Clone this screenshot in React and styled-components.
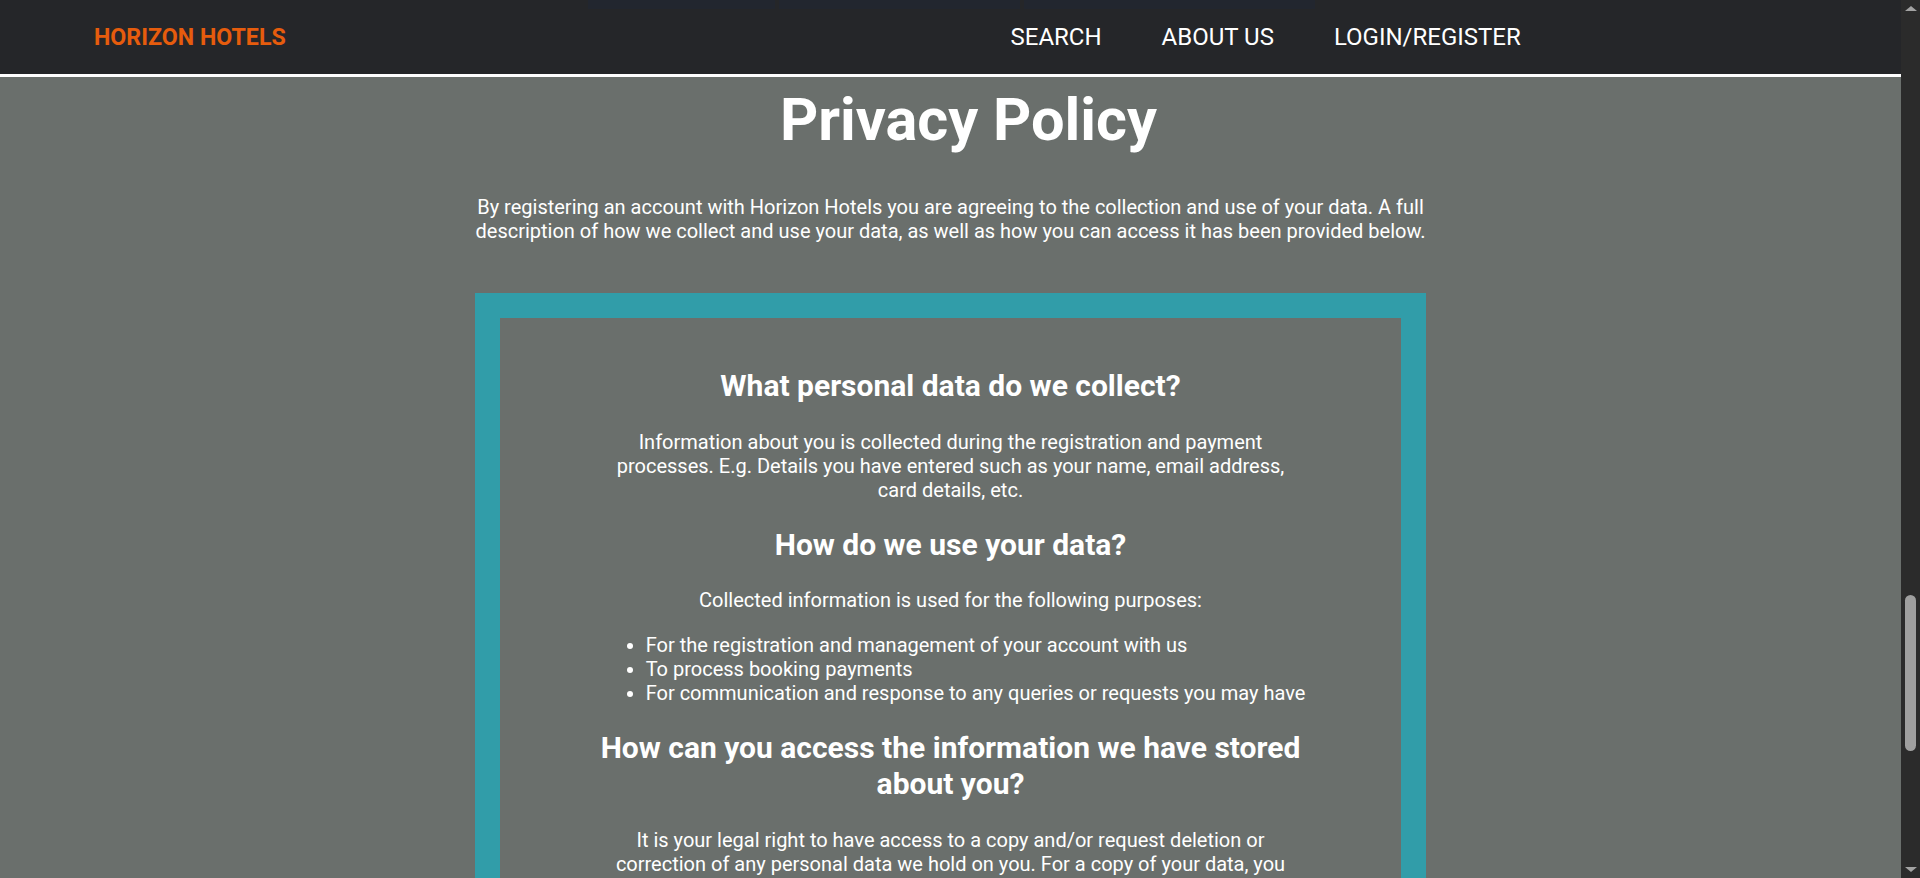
import React from "react";
import styled, { createGlobalStyle } from "styled-components";

const GlobalStyle = createGlobalStyle`
  body {
    margin: 0;
    background: #6a6f6c;
    color: #ffffff;
    font-family: Roboto, "Liberation Sans", Arial, sans-serif;
  }
  * {
    box-sizing: border-box;
  }
`;

const Page = styled.div`
  margin-right: 19px;
`;

const NavBar = styled.header`
  position: fixed;
  top: 0;
  left: 0;
  right: 19px;
  z-index: 10;
  height: 77px;
  background: #252629;
  border-bottom: 3px solid #ffffff;
`;

const BehindStrip = styled.div`
  position: absolute;
  top: 0;
  left: 588px;
  display: flex;
  gap: 4px;
  height: 9px;
`;

const StripPiece = styled.div`
  width: ${(p) => p.$w}px;
  height: 100%;
  background: #22262f;
`;

const NavInner = styled.nav`
  position: relative;
  width: 80%;
  height: 100%;
  padding-left: 94px;
  display: flex;
  align-items: center;
  justify-content: space-between;
`;

const Logo = styled.a`
  font-size: 23.2px;
  font-weight: 700;
  color: #e65c0d;
  text-decoration: none;
`;

const NavLinks = styled.ul`
  list-style: none;
  margin: 0;
  padding: 0;
  display: flex;
  gap: 60px;
`;

const NavLink = styled.a`
  font-size: 24px;
  font-weight: 400;
  color: #ffffff;
  text-decoration: none;
`;

const ScrollRail = styled.div`
  position: fixed;
  top: 0;
  right: 0;
  bottom: 0;
  width: 19px;
  z-index: 20;
  background: #2b2b2b;
  display: flex;
  flex-direction: column;
  align-items: center;
  justify-content: space-between;
  padding: 6px 0;
`;

const Arrow = styled.div`
  width: 0;
  height: 0;
  border-left: 6px solid transparent;
  border-right: 6px solid transparent;
  ${(p) =>
    p.$down
      ? "border-top: 5px solid #a3a3a3;"
      : "border-bottom: 5px solid #a3a3a3;"}
`;

const Thumb = styled.div`
  position: absolute;
  top: 595px;
  left: 4px;
  width: 11px;
  height: 156px;
  border-radius: 6px;
  background: #9f9f9f;
`;

const Main = styled.main`
  padding-top: 77px;
  padding-bottom: 120px;
`;

const Title = styled.h1`
  margin: 7px 0 0;
  padding-left: 36px;
  font-size: 59.5px;
  line-height: 72px;
  font-weight: 700;
  text-align: center;
`;

const Intro = styled.p`
  width: 50%;
  margin: 39px auto 0;
  font-size: 20px;
  line-height: 24px;
  text-align: center;
`;

const Frame = styled.section`
  width: 50%;
  margin: 50px auto 0;
  padding: 25px;
  background: #319da9;
`;

const Panel = styled.div`
  background: #6a6f6c;
  padding: 25px 100px;
  text-align: center;
`;

const Heading = styled.h2`
  margin: 25px 0;
  font-size: 30px;
  line-height: 36.5px;
  font-weight: 700;
`;

const Text = styled.p`
  margin: 20px 0;
  font-size: 20px;
  line-height: 24px;
`;

const ListRow = styled.div`
  display: flex;
  justify-content: center;
  margin: 20.5px 0;
`;

const List = styled.ul`
  flex: none;
  width: max-content;
  margin: 0;
  padding-left: 50px;
  text-align: left;
  font-size: 20px;
  line-height: 24px;
`;

const Item = styled.li``;

export default function App() {
  return (
    <>
      <GlobalStyle />
      <ScrollRail aria-hidden="true">
        <Arrow />
        <Thumb />
        <Arrow $down />
      </ScrollRail>
      <Page>
        <NavBar>
          <BehindStrip aria-hidden="true">
            <StripPiece $w={187} />
            <StripPiece $w={241} />
            <StripPiece $w={291} />
          </BehindStrip>
          <NavInner>
            <Logo href="#">HORIZON HOTELS</Logo>
            <NavLinks>
              <li>
                <NavLink href="#">SEARCH</NavLink>
              </li>
              <li>
                <NavLink href="#">ABOUT US</NavLink>
              </li>
              <li>
                <NavLink href="#">LOGIN/REGISTER</NavLink>
              </li>
            </NavLinks>
          </NavInner>
        </NavBar>
        <Main>
          <Title>Privacy Policy</Title>
          <Intro>
            By registering an account with Horizon Hotels you are agreeing to
            the collection and use of your data. A full description of how we
            collect and use your data, as well as how you can access it has
            been provided below.
          </Intro>
          <Frame>
            <Panel>
              <Heading>What personal data do we collect?</Heading>
              <Text>
                Information about you is collected during the registration and
                payment processes. E.g. Details you have entered such as your
                name, email address, card details, etc.
              </Text>
              <Heading>How do we use your data?</Heading>
              <Text>Collected information is used for the following purposes:</Text>
              <ListRow>
                <List>
                  <Item>For the registration and management of your account with us</Item>
                  <Item>To process booking payments</Item>
                  <Item>For communication and response to any queries or requests you may have</Item>
                </List>
              </ListRow>
              <Heading>How can you access the information we have stored about you?</Heading>
              <Text>
                It is your legal right to have access to a copy and/or request
                deletion or correction of any personal data we hold on you. For
                a copy of your data, you can contact us through the About Us
                page and we will respond to your request as soon as possible.
              </Text>
              <Heading>How long do we keep your data?</Heading>
              <Text>
                Your data is kept for as long as your account remains active.
                If you close your account, your personal data will be deleted
                from our records.
              </Text>
            </Panel>
          </Frame>
        </Main>
      </Page>
    </>
  );
}
